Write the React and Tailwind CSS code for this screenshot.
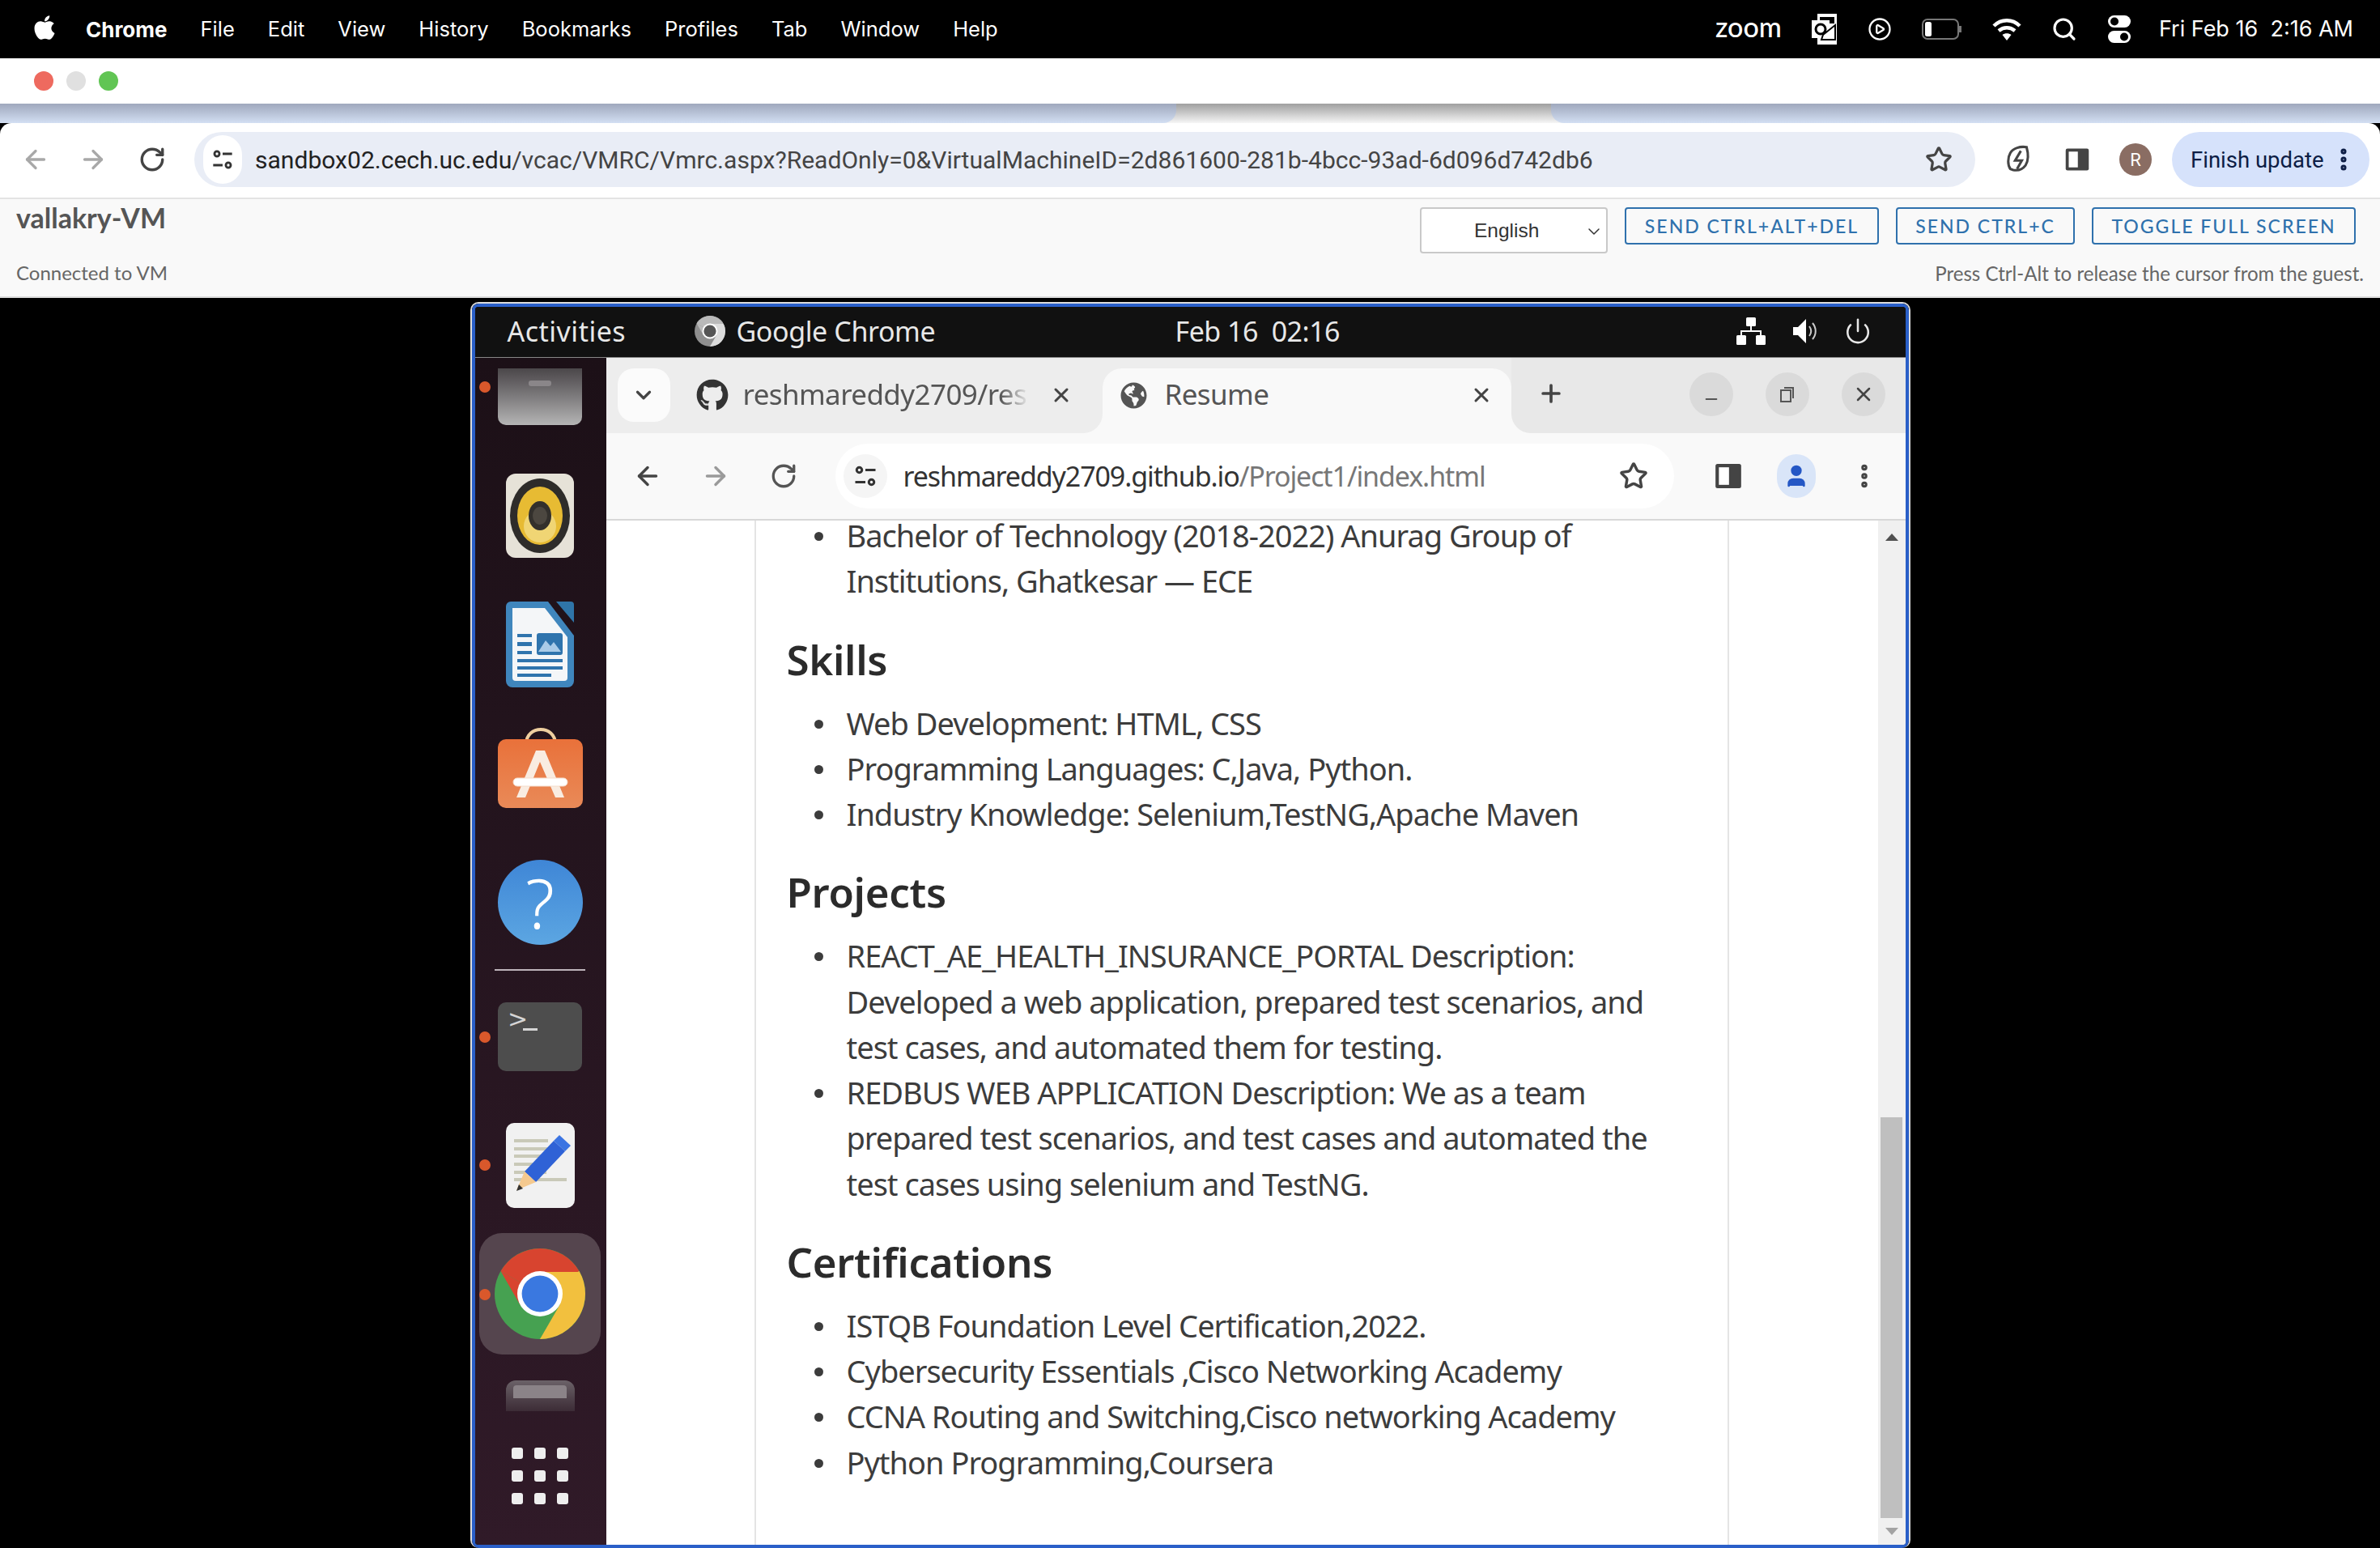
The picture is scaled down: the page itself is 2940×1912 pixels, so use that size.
import { ArrowLeft, ArrowRight, RotateCw, Star, Search, CirclePlay, Power, ChevronDown, X, Plus, Minus, EllipsisVertical, User } from 'lucide-react';
import { FaApple, FaGithub, FaGlobeAmericas } from 'react-icons/fa';

const MENU_ITEMS = ['File', 'Edit', 'View', 'History', 'Bookmarks', 'Profiles', 'Tab', 'Window', 'Help'];

function TuneIcon({ size = 30, color = '#333' }) {
    return (
        <svg width={size} height={size} viewBox="0 0 24 24" fill="none" stroke={color} strokeWidth="2.4">
            <circle cx="6" cy="6" r="2.6" />
            <path d="M12 6h10M2 18h10" />
            <circle cx="18" cy="18" r="2.6" />
        </svg>
    );
}

function SidePanelIcon({ size = 32, color = '#444' }) {
    return (
        <svg width={size} height={size} viewBox="0 0 24 24">
            <rect x="2.5" y="3" width="19" height="18" rx="1.5" fill={color} />
            <rect x="5" y="5.5" width="7.5" height="13" fill="#fff" />
        </svg>
    );
}

function OutlookIcon() {
    return (
        <svg width="32" height="38" viewBox="0 0 32 38">
            <rect x="7" y="0" width="24" height="38" fill="#fff" />
            <rect x="10" y="4" width="18" height="8" fill="#000" />
            <rect x="0" y="8" width="22" height="22" fill="#fff" />
            <circle cx="11" cy="19" r="6" fill="none" stroke="#000" strokeWidth="3" />
            <path d="M14 26l15-12v18H12z" fill="none" stroke="#000" strokeWidth="2" />
        </svg>
    );
}

function BatteryIcon() {
    return (
        <svg width="50" height="30" viewBox="0 0 50 30">
            <rect x="1" y="3" width="44" height="24" rx="6" fill="none" stroke="#777" strokeWidth="2" />
            <rect x="4" y="6" width="8" height="18" rx="2.5" fill="#fff" />
            <path d="M47.5 11v8" stroke="#777" strokeWidth="3" />
        </svg>
    );
}

function WifiIcon() {
    return (
        <svg width="36" height="30" viewBox="0 0 36 30" fill="none" stroke="#fff" strokeWidth="4.5">
            <path d="M2 11c9-9 23-9 32 0" />
            <path d="M8 17c6-5 14-5 20 0" />
            <path d="M18 29l-5.500-7c3-2.500 8-2.500 11 0z" fill="#fff" stroke="none" />
        </svg>
    );
}

function ControlIcon() {
    return (
        <svg width="30" height="38" viewBox="0 0 30 38">
            <rect x="1" y="2" width="28" height="15" rx="7.500" fill="#fff" />
            <circle cx="9" cy="9.500" r="5" fill="#000" />
            <rect x="1" y="21" width="28" height="15" rx="7.500" fill="#fff" />
            <circle cx="21" cy="28.500" r="5" fill="#000" />
        </svg>
    );
}

function BoltIcon() {
    return (
        <svg width="36" height="40" viewBox="0 0 30 34" fill="none" stroke="#444" strokeWidth="2.600">
            <path d="M6 27c-3-4-3-12 0-17 3-5 10-7 17-6 2 7 2 14-1 19-3 4-8 6-13 5z" />
            <path d="M17 8l-6 10h7l-5 9" />
        </svg>
    );
}

function NetworkIcon() {
    return (
        <svg width="36" height="34" viewBox="0 0 36 34" fill="#fff">
            <rect x="12" y="0" width="12" height="11" rx="1.500" />
            <rect x="0" y="22" width="12" height="12" rx="1.500" />
            <rect x="24" y="22" width="12" height="12" rx="1.500" />
            <path d="M17 11h2v5h12v6h-2v-4H7v4H5v-6h12z" />
        </svg>
    );
}

function SpeakerIcon() {
    return (
        <svg width="34" height="34" viewBox="0 0 34 34" fill="none">
            <path d="M2 12h6l10-10v30L8 22H2z" fill="#fff" />
            <path d="M22 11c3 4 3 8 0 12M26 7c5 6 5 14 0 20" stroke="#ccc" strokeWidth="2" />
        </svg>
    );
}

function ChromeLogo({ size = 112, grey = false }) {
    const red = grey ? '#b9b9b9' : '#d8442f';
    const yellow = grey ? '#dcdcdc' : '#f2c03e';
    const green = grey ? '#8f8f8f' : '#46a151';
    const blue = grey ? '#555' : '#3a78e0';
    return (
        <svg width={size} height={size} viewBox="0 0 100 100">
            <circle cx="50" cy="50" r="50" fill={green} />
            <path d="M50 50L6.700 25A50 50 0 0 1 93.300 25z" fill={red} />
            <path d="M50 50L93.300 25A50 50 0 0 1 50 100z" fill={yellow} />
            <path d="M6.700 25L28 62 50 50z" fill={red} />
            <path d="M50 26h43.300L72 62z" fill={yellow} />
            <path d="M50 100L72 62 50 50z" fill={green} />
            <circle cx="50" cy="50" r="25" fill="#fff" />
            <circle cx="50" cy="50" r="20" fill={blue} />
        </svg>
    );
}

function RhythmboxIcon() {
    return (
        <div className="w-[84px] h-[104px] rounded-[12px] bg-[#e6e2d8] flex items-center justify-center">
            <svg width="76" height="94" viewBox="0 0 76 94">
                <ellipse cx="38" cy="47" rx="37" ry="46" fill="#2e2c2a" />
                <ellipse cx="38" cy="47" rx="28" ry="36" fill="#e7bb33" />
                <ellipse cx="38" cy="60" rx="20" ry="20" fill="#f0d574" />
                <ellipse cx="38" cy="47" rx="14" ry="18" fill="#33302c" />
                <ellipse cx="38" cy="47" rx="9" ry="11" fill="#4c4740" />
            </svg>
        </div>
    );
}

function WriterIcon() {
    return (
        <svg width="84" height="106" viewBox="0 0 84 106">
            <path d="M6 0h46l32 42v56a8 8 0 0 1-8 8H8a8 8 0 0 1-8-8V6a6 6 0 0 1 6-6z" fill="#3f86bd" />
            <path d="M8 8h40l28 36v50a4 4 0 0 1-4 4H12a4 4 0 0 1-4-4z" fill="#f4f6f8" />
            <path d="M62 0h18a4 4 0 0 1 4 4v22z" fill="#2f75a9" />
            <path d="M14 40h18v4H14zM14 50h18v5H14zM14 61h18v4H14zM14 71h56v4H14zM14 80h56v4H14zM14 89h42v4H14z" fill="#2f74ad" />
            <rect x="38" y="39" width="32" height="27" rx="3" fill="#2f74ad" />
            <path d="M40 62l9-14 6 7 4-5 9 12z" fill="#a9cbe8" />
        </svg>
    );
}

function SoftwareIcon() {
    return (
        <svg width="105" height="99" viewBox="0 0 105 99">
            <path d="M35 20c0-24 36-24 36 0" fill="none" stroke="#eecf9f" strokeWidth="4" />
            <defs>
                <linearGradient id="bag" x1="0" y1="0" x2="0" y2="1">
                    <stop offset="0" stopColor="#e9713a" />
                    <stop offset="1" stopColor="#e98a58" />
                </linearGradient>
            </defs>
            <rect x="0" y="14" width="105" height="85" rx="10" fill="url(#bag)" />
            <path d="M47 28h11l24 58H71L52 42 34 86H23z" fill="#f9ece1" />
            <rect x="19" y="62" width="67" height="10" rx="5" fill="#fff" stroke="#f4dccb" strokeWidth="1" />
        </svg>
    );
}

function HelpIcon() {
    return (
        <div className="w-[105px] h-[105px] rounded-full bg-gradient-to-b from-[#3f86d6] to-[#5ca6e2] flex items-center justify-center text-white text-[84px] leading-none font-light font-['Noto_Sans',sans-serif]">
            ?
        </div>
    );
}

function EditorIcon() {
    return (
        <svg width="85" height="105" viewBox="0 0 85 105">
            <rect width="85" height="105" rx="10" fill="#f1f1f1" />
            <path d="M10 22h42M10 32h62M10 41h50M10 51h40M10 61h40M10 70h65" stroke="#c9c9b8" strokeWidth="4" />
            <path d="M59 22l14 13-36 38-14-13z" fill="#2f62d6" />
            <path d="M59 22l7-7 14 13-7 7z" fill="#3b74e2" />
            <path d="M23 60l14 13-24 10z" fill="#f4c98f" />
            <path d="M16 76l5 5-8 3z" fill="#333" />
        </svg>
    );
}

function DockItem({ dotTop, className = '', children }) {
    return (
        <div className={`relative w-full flex justify-center ${className}`}>
            {dotTop !== undefined && (
                <span
                    className="absolute left-[5px] w-[14px] h-[14px] rounded-full bg-[#d9582b]"
                    style={{ top: dotTop }}
                />
            )}
            {children}
        </div>
    );
}

function Dock() {
    return (
        <aside className="w-[162px] shrink-0 bg-gradient-to-b from-[#1c1017] to-[#301a28] flex flex-col items-center overflow-hidden pr-[1px]">
            <DockItem className="mt-[13px]" dotTop={16}>
                <div className="w-[104px] h-[70px] rounded-b-[10px] bg-gradient-to-b from-[#4b474a] to-[#b5b5b5] flex justify-center pt-[15px]">
                    <span className="block w-[28px] h-[7px] rounded-[3px] bg-[#8a8689]" />
                </div>
            </DockItem>
            <DockItem className="mt-[60px]"><RhythmboxIcon /></DockItem>
            <DockItem className="mt-[54px]"><WriterIcon /></DockItem>
            <DockItem className="mt-[50px]"><SoftwareIcon /></DockItem>
            <DockItem className="mt-[64px]"><HelpIcon /></DockItem>
            <div className="mt-[30px] w-[112px] h-[2px] bg-[#bdb3ba]" />
            <DockItem className="mt-[39px]" dotTop={36}>
                <div className="w-[104px] h-[85px] rounded-[10px] bg-[#4d4d4d] relative">
                    <span className="absolute left-[12px] top-[6px] text-[#d5d5d5] text-[30px] leading-[30px] font-['DejaVu_Sans',sans-serif]">&gt;</span>
                    <span className="absolute left-[31px] top-[32px] w-[18px] h-[3px] bg-[#d5d5d5]" />
                </div>
            </DockItem>
            <DockItem className="mt-[64px]" dotTop={45}><EditorIcon /></DockItem>
            <DockItem className="mt-[31px]" dotTop={69}>
                <div className="w-[150px] h-[150px] rounded-[28px] bg-[#55454e] flex items-center justify-center">
                    <ChromeLogo />
                </div>
            </DockItem>
            <DockItem className="mt-[32px]">
                <div className="w-[85px] h-[38px] rounded-t-[12px] bg-gradient-to-b from-[#6b6268] to-[#3c2c36] flex justify-center pt-[6px]">
                    <span className="block w-[66px] h-[16px] rounded-t-[4px] bg-[#8b8388]" />
                </div>
            </DockItem>
            <div className="mt-[45px] grid grid-cols-3 gap-[14px]">
                {Array.from({ length: 9 }).map((_, i) => (
                    <span key={i} className="block w-[14px] h-[14px] rounded-[3px] bg-[#eeeeee]" />
                ))}
            </div>
        </aside>
    );
}

function ResumeList({ items }) {
    return (
        <ul className="pl-[34px]">
            {items.map((item) => (
                <li key={item[0]} className="flex">
                    <span className="shrink-0 w-[11px] h-[11px] mt-[24px] mr-[29px] rounded-full bg-[#3c3c3c]" />
                    <div>
                        {item.map((line) => (
                            <span key={line} className="block whitespace-nowrap">{line}</span>
                        ))}
                    </div>
                </li>
            ))}
        </ul>
    );
}

function ResumeHeading({ children }) {
    return <h2 className="mt-8 mb-[15px] text-[51px] leading-[72px] font-semibold tracking-[-0.300px] text-[#2b2b2b]">{children}</h2>;
}

function VmWindow() {
    return (
        <div className="flex-1 flex flex-col min-w-0 bg-white">
            {/* tab strip */}
            <div className="h-[93px] shrink-0 flex bg-[#f9f9f9] text-[#555] text-[35px] tracking-[-0.600px]">
                <div className="w-[613px] h-full bg-[#ededed] rounded-br-[24px] flex items-start pt-[13px] pl-[14px]">
                    <div className="w-[65px] h-[66px] rounded-[20px] bg-[#fbfbfb] flex items-center justify-center">
                        <ChevronDown size={30} strokeWidth={2.6} color="#444" />
                    </div>
                    <FaGithub size={40} color="#333" className="ml-[32px] mt-[13px]" />
                    <span className="ml-[18px] mt-[7px] w-[353px] whitespace-nowrap leading-[50px] [mask-image:linear-gradient(to_right,black_90%,transparent)]">reshmareddy2709/res</span>
                    <X size={28} strokeWidth={2.6} color="#444" className="ml-[26px] mt-[19px]" />
                </div>
                <div className="w-[505px] h-full bg-[#ededed]">
                    <div className="h-[80px] mt-[13px] rounded-t-[24px] bg-[#f9f9f9] flex items-start pl-[22px] pt-[7px]">
                        <FaGlobeAmericas size={33} color="#555" className="mt-[10px]" />
                        <span className="ml-[22px] w-[126px] leading-[50px]">Resume</span>
                        <X size={28} strokeWidth={2.6} color="#444" className="ml-[251px] mt-[12px]" />
                    </div>
                </div>
                <div className="flex-1 bg-[#e8e8e8] rounded-bl-[24px] flex items-start pt-[18px] pl-[32px]">
                    <Plus size={34} strokeWidth={2.6} color="#444" className="mt-[9px]" />
                    <div className="ml-[154px] w-[54px] h-[54px] rounded-full bg-[#dadada] flex items-center justify-center">
                        <Minus size={22} strokeWidth={2} color="#555" className="mt-[12px]" />
                    </div>
                    <div className="ml-[40px] w-[54px] h-[54px] rounded-full bg-[#dadada] flex items-center justify-center">
                        <svg width="20" height="22" viewBox="0 0 20 22" fill="none" stroke="#555" strokeWidth="2">
                            <rect x="2" y="6" width="12" height="14" />
                            <path d="M6 3h11v13" />
                        </svg>
                    </div>
                    <div className="ml-[40px] w-[54px] h-[54px] rounded-full bg-[#dadada] flex items-center justify-center">
                        <X size={28} strokeWidth={2.2} color="#444" />
                    </div>
                </div>
            </div>

            {/* toolbar */}
            <div className="h-[108px] shrink-0 bg-[#f9f9f9] flex items-center pl-[33px] border-b-2 border-[#d8d8d8]">
                <ArrowLeft size={36} strokeWidth={2.3} color="#444" />
                <ArrowRight size={36} strokeWidth={2.3} color="#9a9a9a" className="ml-[48px]" />
                <RotateCw size={34} strokeWidth={2.3} color="#555" className="ml-[49px]" />
                <div className="ml-[47px] w-[1036px] h-[80px] rounded-full bg-white flex items-center pl-[10px]">
                    <div className="w-[54px] h-[54px] rounded-full bg-[#f5f5f5] flex items-center justify-center">
                        <TuneIcon size={30} />
                    </div>
                    <span className="ml-[20px] text-[34px] tracking-[-1.100px] text-[#333] whitespace-nowrap">
                        reshmareddy2709.github.io<span className="text-[#777]">/Project1/index.html</span>
                    </span>
                    <Star size={36} strokeWidth={2.3} color="#444" className="ml-auto mr-[32px]" />
                </div>
                <div className="ml-[47px]"><SidePanelIcon size={40} /></div>
                <div className="ml-[40px] w-[48px] h-[54px] rounded-full bg-[#d9e5f8] flex items-center justify-center">
                    <User size={32} color="#2457c5" fill="#2457c5" />
                </div>
                <EllipsisVertical size={36} strokeWidth={3} color="#444" className="ml-[42px]" />
            </div>

            {/* page */}
            <div className="flex-1 min-h-0 flex overflow-hidden">
                <div className="flex-1 min-w-0 flex overflow-hidden pl-[183px]">
                    <article className="w-[1204px] shrink-0 border-x-2 border-[#e4e4e4] pl-[38px] -mt-[10px] pt-[2px] text-[38px] tracking-[-1px] leading-[56.250px] text-[#3c3c3c]">
                        <div className="-mt-[2px]">
                            <ResumeList items={[['Bachelor of Technology (2018-2022) Anurag Group of', 'Institutions, Ghatkesar — ECE']]} />
                        </div>
                        <ResumeHeading>Skills</ResumeHeading>
                        <ResumeList
                            items={[
                                ['Web Development: HTML, CSS'],
                                ['Programming Languages: C,Java, Python.'],
                                ['Industry Knowledge: Selenium,TestNG,Apache Maven'],
                            ]}
                        />
                        <ResumeHeading>Projects</ResumeHeading>
                        <ResumeList
                            items={[
                                ['REACT_AE_HEALTH_INSURANCE_PORTAL Description:', 'Developed a web application, prepared test scenarios, and', 'test cases, and automated them for testing.'],
                                ['REDBUS WEB APPLICATION Description: We as a team', 'prepared test scenarios, and test cases and automated the', 'test cases using selenium and TestNG.'],
                            ]}
                        />
                        <ResumeHeading>Certifications</ResumeHeading>
                        <ResumeList
                            items={[
                                ['ISTQB Foundation Level Certification,2022.'],
                                ['Cybersecurity Essentials ,Cisco Networking Academy'],
                                ['CCNA Routing and Switching,Cisco networking Academy'],
                                ['Python Programming,Coursera'],
                            ]}
                        />
                    </article>
                </div>
                <div className="w-[34px] shrink-0 bg-[#f0f0f0] flex flex-col items-center">
                    <span className="mt-[16px] w-0 h-0 border-x-[8px] border-x-transparent border-b-[9px] border-b-[#505050]" />
                    <div className="mt-[712px] w-[27px] h-[495px] bg-[#bfbfbf]" />
                    <span className="mt-[12px] w-0 h-0 border-x-[8px] border-x-transparent border-t-[9px] border-t-[#a3a3a3]" />
                </div>
            </div>
        </div>
    );
}

function VmScreen() {
    return (
        <div className="w-[1779px] h-[1539px] mt-[5px] border-2 border-b-0 border-[#dcdcdc] rounded-[10px] overflow-hidden">
            <div className="h-full border-4 border-[#2a5fc8] rounded-[8px] flex flex-col overflow-hidden font-['Noto_Sans',sans-serif]">
                <div className="h-[63px] shrink-0 bg-[#111111] border-b border-[#888] flex items-center pb-[2px] pl-[40px] text-[#e8e8e8] text-[34px]">
                    <span className="w-[146px] tracking-[0.500px]">Activities</span>
                    <span className="ml-[85px]"><ChromeLogo size={38} grey /></span>
                    <span className="ml-[14px] w-[243px] tracking-[-0.400px] whitespace-nowrap">Google Chrome</span>
                    <span className="ml-[299px] tracking-[-0.500px]">Feb 16&nbsp;&nbsp;02:16</span>
                    <span className="ml-auto"><NetworkIcon /></span>
                    <span className="ml-[32px]"><SpeakerIcon /></span>
                    <Power size={34} strokeWidth={1.8} color="#e8e8e8" className="ml-[31px] mr-[42px]" />
                </div>
                <div className="flex-1 min-h-0 flex">
                    <Dock />
                    <VmWindow />
                </div>
            </div>
        </div>
    );
}

export default function App() {
    return (
        <div className="w-[2940px] h-[1912px] overflow-hidden bg-black flex flex-col">
            {/* mac menu bar */}
            <div className="h-[72px] shrink-0 bg-black text-white text-[27px] flex items-center pl-[38px] pr-[33px] font-['Inter',sans-serif]">
                <FaApple size={34} className="-mt-[4px]" />
                <div className="ml-[34px] flex items-center gap-[41px] text-[25.500px]">
                    <span className="font-bold text-[26px]">Chrome</span>
                    {MENU_ITEMS.map((m) => <span key={m}>{m}</span>)}
                </div>
                <div className="ml-auto flex items-center gap-[37px]">
                    <span className="text-[34px] font-medium leading-none -mt-[6px] font-['Lato',sans-serif]">zoom</span>
                    <OutlookIcon />
                    <CirclePlay size={30} strokeWidth={1.8} />
                    <BatteryIcon />
                    <WifiIcon />
                    <Search size={32} strokeWidth={2.4} />
                    <ControlIcon />
                    <span className="-ml-[3px] whitespace-pre">Fri Feb 16  2:16 AM</span>
                </div>
            </div>

            {/* title row */}
            <div className="h-[56px] shrink-0 bg-white flex items-center pl-[42px] gap-[16px]">
                <span className="w-[24px] h-[24px] rounded-full bg-[#ee6a5f]" />
                <span className="w-[24px] h-[24px] rounded-full bg-[#e0e0e0]" />
                <span className="w-[24px] h-[24px] rounded-full bg-[#61c554]" />
            </div>

            {/* tab strip */}
            <div className="h-[24px] shrink-0 flex bg-gradient-to-b from-[#a0a0a0] to-[#f6f6f6]">
                <div className="w-[1453px] h-full rounded-br-[16px] bg-gradient-to-b from-[#9fa8bd] to-[#d3dff3]" />
                <div className="ml-[463px] flex-1 h-full rounded-bl-[16px] bg-gradient-to-b from-[#9fa8bd] to-[#d3dff3]" />
            </div>

            {/* browser toolbar */}
            <div className="h-[94px] shrink-0 bg-white border-b-2 border-[#e3e3e3] rounded-t-[14px] flex items-center pl-[26px] pb-[2px] font-['Roboto',sans-serif]">
                <ArrowLeft size={36} strokeWidth={2.2} color="#a8a8a8" />
                <ArrowRight size={36} strokeWidth={2.2} color="#a8a8a8" className="ml-[35px]" />
                <RotateCw size={34} strokeWidth={2.4} color="#444" className="ml-[38px]" />
                <div className="ml-[35px] w-[2200px] h-[68px] rounded-full bg-[#e9edf6] flex items-center pl-[11px]">
                    <div className="w-[48px] h-[60px] rounded-full bg-white flex items-center justify-center">
                        <TuneIcon size={28} />
                    </div>
                    <span className="ml-[16px] mt-[2px] text-[30.050px] text-[#444] whitespace-nowrap">
                        <span className="text-[#222]">sandbox02.cech.uc.edu</span>/vcac/VMRC/Vmrc.aspx?ReadOnly=0&amp;VirtualMachineID=2d861600-281b-4bcc-93ad-6d096d742db6
                    </span>
                    <Star size={34} strokeWidth={2.3} color="#444" className="ml-auto mr-[28px]" />
                </div>
                <div className="ml-[36px]"><BoltIcon /></div>
                <div className="ml-[36px]"><SidePanelIcon size={36} /></div>
                <div className="ml-[34px] w-[40px] h-[40px] rounded-full bg-[#8a6d63] flex items-center justify-center text-white text-[22px]">R</div>
                <div className="ml-[25px] w-[244px] h-[68px] rounded-full bg-[#d6e2fb] flex items-center pl-[23px] text-[#0d1d45] text-[27.500px]">
                    <span className="whitespace-nowrap mt-[2px]">Finish update</span>
                    <EllipsisVertical size={34} strokeWidth={3} className="ml-[7px]" />
                </div>
            </div>

            {/* vmrc header */}
            <div className="h-[122px] shrink-0 bg-[#f9f9f9] border-b-2 border-[#dddddd] flex justify-between px-[20px] font-['Lato',sans-serif]">
                <div className="flex flex-col pt-[6px]">
                    <span className="text-[34px] leading-[34px] font-bold text-[#555]">vallakry-VM</span>
                    <span className="mt-[37px] text-[24px] leading-[28px] text-[#666]">Connected to VM</span>
                </div>
                <div className="flex flex-col items-end pt-[10px]">
                    <div className="flex items-start gap-[21px] pr-[10px]">
                        <div className="w-[232px] h-[57px] bg-white border-2 border-[#c9c9c9] rounded-[4px] flex items-center pl-[65px] pr-[3px] pt-[2px] text-[24.500px] text-[#333] font-['Liberation_Sans',sans-serif]">
                            <span>English</span>
                            <ChevronDown size={24} strokeWidth={1.5} className="ml-auto" />
                        </div>
                        <button className="w-[314px] h-[46px] border-2 border-[#2f71ad] rounded-[4px] text-[23px] font-medium tracking-[2px] text-[#2f71ad]">SEND CTRL+ALT+DEL</button>
                        <button className="w-[221px] h-[46px] border-2 border-[#2f71ad] rounded-[4px] text-[23px] font-medium tracking-[2px] text-[#2f71ad]">SEND CTRL+C</button>
                        <button className="w-[326px] h-[46px] border-2 border-[#2f71ad] rounded-[4px] text-[23px] font-medium tracking-[2px] text-[#2f71ad]">TOGGLE FULL SCREEN</button>
                    </div>
                    <span className="mt-[11px] text-[24.100px] leading-[28px] text-[#666]">Press Ctrl-Alt to release the cursor from the guest.</span>
                </div>
            </div>

            <div className="flex justify-center">
                <VmScreen />
            </div>
        </div>
    );
}
